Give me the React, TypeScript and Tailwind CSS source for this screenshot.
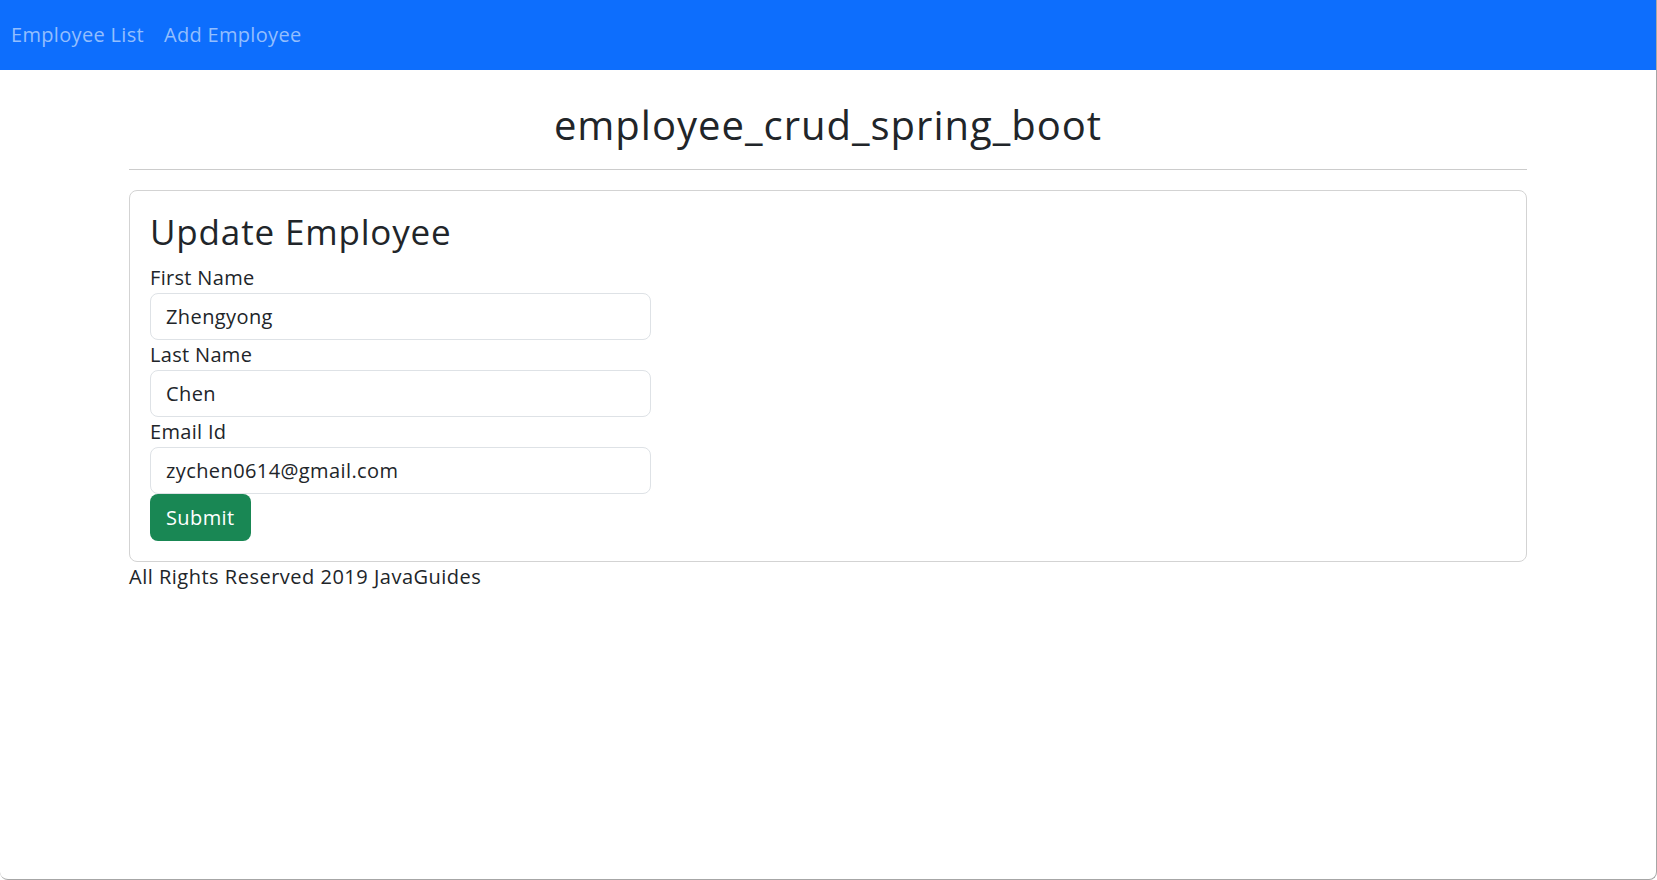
const fields = [
  { label: "First Name", value: "Zhengyong" },
  { label: "Last Name", value: "Chen" },
  { label: "Email Id", value: "zychen0614@gmail.com" },
];

function Header() {
  return (
    <nav className="flex h-[70px] items-center bg-[#0d6efd] pl-[1px]">
      <a href="#" className="px-[10px] text-[20px] leading-[30px] text-[#93befe]">
        Employee List
      </a>
      <a href="#" className="px-[10px] text-[20px] leading-[30px] text-[#93befe]">
        Add Employee
      </a>
    </nav>
  );
}

function UpdateEmployee() {
  return (
    <div className="rounded-[8px] border border-[#d3d3d3] p-[20px]">
      <h3 className="mb-[10px] text-[35px] leading-[42px] tracking-[0.024em] text-[#212529]">Update Employee</h3>
      <form onSubmit={(e) => e.preventDefault()}>
        {fields.map((f) => (
          <div key={f.label}>
            <label className="block h-[30px] text-[20px] leading-[30px] text-[#212529]">{f.label}</label>
            <input
              defaultValue={f.value}
              className="block h-[47px] w-[501px] rounded-[8px] border border-[#dee2e6] px-[15px] text-[20px] tracking-[0.02em] text-[#212529] outline-none"
            />
          </div>
        ))}
        <button
          type="submit"
          className="h-[47px] rounded-[8px] bg-[#198754] px-[16px] text-[20px] tracking-[0.02em] text-white"
        >
          Submit
        </button>
      </form>
    </div>
  );
}

export default function App() {
  return (
    <div className="h-[880px] overflow-hidden rounded-b-[8px] border-r border-b border-[#a6a6a6] bg-white font-['Open_Sans','Noto_Sans',sans-serif] tracking-[0.02em] text-[#212529]">
      <Header />
      <div className="mx-auto w-[1398px]">
        <h2 className="mt-[31px] text-center text-[40px] leading-[48px] tracking-[0.025em]">employee_crud_spring_boot</h2>
        <hr className="mt-[20px] mb-[20px] border-t border-[#cccccc]" />
        <UpdateEmployee />
        <div className="text-[20px] leading-[30px] tracking-[0.025em]">All Rights Reserved 2019 JavaGuides</div>
      </div>
    </div>
  );
}
